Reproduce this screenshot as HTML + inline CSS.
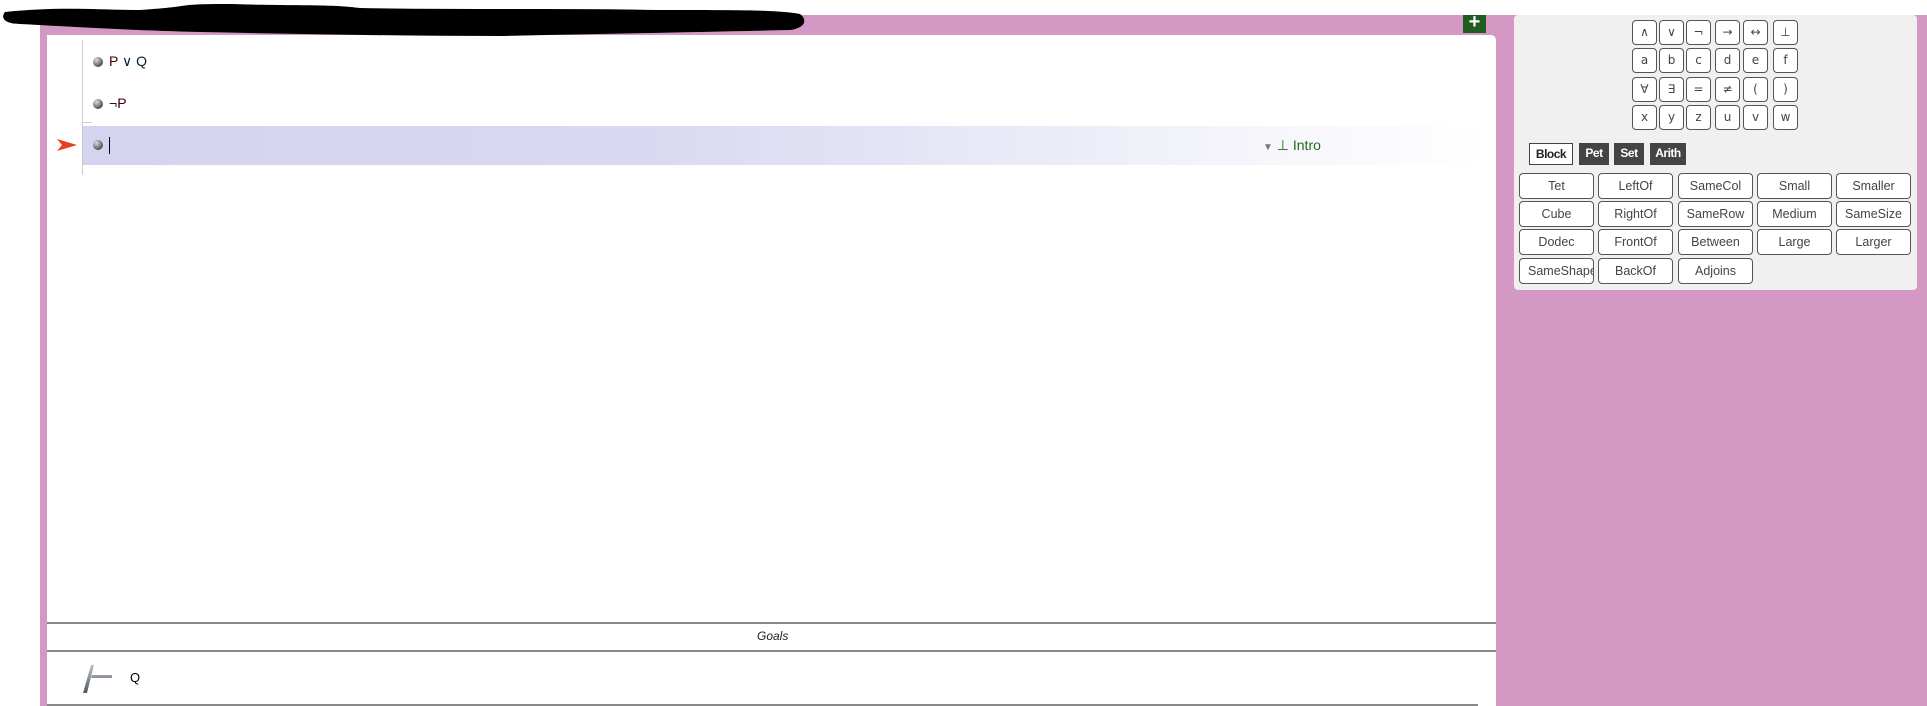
<!DOCTYPE html>
<html><head><meta charset="utf-8"><style>
*{box-sizing:border-box;margin:0;padding:0}
body{width:1927px;height:706px;background:#fff;position:relative;overflow:hidden;font-family:"Liberation Sans","DejaVu Sans",sans-serif}
.pink{position:absolute;left:40px;top:15px;width:1887px;height:691px;background:#d398c3}
.main{position:absolute;left:47px;top:35px;width:1449px;height:671px;background:#fff;border-top-right-radius:5px}
.vl{position:absolute;left:82px;top:40px;width:1px;height:135px;background:#ccc}
.ball{position:absolute;width:10px;height:10px;border-radius:50%;background:radial-gradient(circle at 35% 30%,#ddd,#666 60%,#222)}
.t{position:absolute;font-size:14px}
.sel{position:absolute;left:83px;top:126px;width:1401px;height:39px;background:linear-gradient(to right,#d4d4f0 0%,#d8d8f2 40%,#f3f3fa 80%,#fff 100%)}
.hl{position:absolute;height:2px;background:#888}
.panel{position:absolute;left:1514px;top:15px;width:403px;height:275px;background:#f0f0f0;border-radius:4px}
.sb{position:absolute;width:25px;height:25px;border:1px solid #555;border-radius:4px;background:#fff;font-size:12px;color:#444;text-align:center;line-height:23px;overflow:hidden;font-family:"DejaVu Sans",sans-serif}
.gb{position:absolute;width:75px;height:26px;border:1px solid #555;border-radius:4px;background:#fff;font-size:12.5px;color:#444;text-align:center;line-height:24px;overflow:hidden;white-space:nowrap}
.tab{position:absolute;top:143px;height:22px;font-size:12px;font-weight:bold;line-height:20px;text-align:center;letter-spacing:-.5px}
</style></head><body>
<div class="pink"></div>
<div class="main"></div>
<svg style="position:absolute;left:0;top:0" width="820" height="40"><path d="M5 12 C60 6 100 10 140 10 C200 6 170 4 230 4 C300 6 330 4 360 8 C460 10 560 8 660 10 C740 10 780 10 800 14 C808 20 805 28 790 30 C700 32 600 34 500 36 C400 36 300 34 200 32 C120 30 60 26 20 24 C5 24 0 18 5 12Z" fill="#000"/></svg>
<div style="position:absolute;left:1463px;top:15px;width:23px;height:18px;background:#1f5d1f;color:#fff;font-weight:bold;font-size:20px;line-height:14px;text-align:center">+</div>
<div class="vl"></div>
<div class="ball" style="left:93px;top:57px"></div>
<div class="t" style="left:109px;top:53px"><span style="color:#400">P</span> <span style="color:#023">∨</span> <span style="color:#023">Q</span></div>
<div class="ball" style="left:93px;top:99px"></div>
<div class="t" style="left:109px;top:95px;color:#023">¬<span style="color:#400">P</span></div>
<div style="position:absolute;left:82px;top:122px;width:10px;height:1px;background:#ccc"></div>
<div class="sel"></div>
<svg style="position:absolute;left:57px;top:139px" width="20" height="12"><path d="M0 0 L20 6 L0 12 L5 6Z" fill="#e8401c"/></svg>
<div class="ball" style="left:93px;top:140px"></div>
<div style="position:absolute;left:109px;top:137px;width:1px;height:17px;background:#000"></div>
<div class="t" style="left:1263px;top:137px;color:#1a6e1a"><span style="color:#777;font-size:10px">▼</span> ⊥ Intro</div>
<div class="hl" style="left:47px;top:622px;width:1449px"></div>
<div style="position:absolute;left:757px;top:629px;font-size:12px;font-style:italic;color:#222">Goals</div>
<div class="hl" style="left:47px;top:650px;width:1449px"></div>
<svg style="position:absolute;left:82px;top:664px" width="30" height="30"><defs><linearGradient id="g" x1="0" y1="0" x2="0" y2="1"><stop offset="0" stop-color="#b8c0c8"/><stop offset="1" stop-color="#555a62"/></linearGradient></defs><path d="M9 1 L12 1 L5 29 L1 29Z M10 11 L30 11 L30 14 L9 14Z" fill="url(#g)"/></svg>
<div style="position:absolute;left:130px;top:670px;font-size:13px">Q</div>
<div class="hl" style="left:47px;top:704px;width:1431px"></div>
<div class="panel"></div>
<div class="sb" style="left:1632px;top:20px">∧</div><div class="sb" style="left:1659px;top:20px">∨</div><div class="sb" style="left:1686px;top:20px">¬</div><div class="sb" style="left:1715px;top:20px">→</div><div class="sb" style="left:1743px;top:20px">↔</div><div class="sb" style="left:1773px;top:20px">⊥</div>
<div class="sb" style="left:1632px;top:48px">a</div><div class="sb" style="left:1659px;top:48px">b</div><div class="sb" style="left:1686px;top:48px">c</div><div class="sb" style="left:1715px;top:48px">d</div><div class="sb" style="left:1743px;top:48px">e</div><div class="sb" style="left:1773px;top:48px">f</div>
<div class="sb" style="left:1632px;top:77px">∀</div><div class="sb" style="left:1659px;top:77px">∃</div><div class="sb" style="left:1686px;top:77px">=</div><div class="sb" style="left:1715px;top:77px">≠</div><div class="sb" style="left:1743px;top:77px">(</div><div class="sb" style="left:1773px;top:77px">)</div>
<div class="sb" style="left:1632px;top:105px">x</div><div class="sb" style="left:1659px;top:105px">y</div><div class="sb" style="left:1686px;top:105px">z</div><div class="sb" style="left:1715px;top:105px">u</div><div class="sb" style="left:1743px;top:105px">v</div><div class="sb" style="left:1773px;top:105px">w</div>
<div class="tab" style="left:1529px;width:44px;background:#fff;border:1px solid #444;color:#222">Block</div>
<div class="tab" style="left:1579px;width:30px;background:#444;color:#fff">Pet</div>
<div class="tab" style="left:1614px;width:30px;background:#444;color:#fff">Set</div>
<div class="tab" style="left:1650px;width:36px;background:#444;color:#fff">Arith</div>
<div class="gb" style="left:1519px;top:173px">Tet</div><div class="gb" style="left:1598px;top:173px">LeftOf</div><div class="gb" style="left:1678px;top:173px">SameCol</div><div class="gb" style="left:1757px;top:173px">Small</div><div class="gb" style="left:1836px;top:173px">Smaller</div>
<div class="gb" style="left:1519px;top:201px">Cube</div><div class="gb" style="left:1598px;top:201px">RightOf</div><div class="gb" style="left:1678px;top:201px">SameRow</div><div class="gb" style="left:1757px;top:201px">Medium</div><div class="gb" style="left:1836px;top:201px">SameSize</div>
<div class="gb" style="left:1519px;top:229px">Dodec</div><div class="gb" style="left:1598px;top:229px">FrontOf</div><div class="gb" style="left:1678px;top:229px">Between</div><div class="gb" style="left:1757px;top:229px">Large</div><div class="gb" style="left:1836px;top:229px">Larger</div>
<div class="gb" style="left:1519px;top:258px;text-align:left;padding-left:8px">SameShape</div><div class="gb" style="left:1598px;top:258px">BackOf</div><div class="gb" style="left:1678px;top:258px">Adjoins</div>
</body></html>
